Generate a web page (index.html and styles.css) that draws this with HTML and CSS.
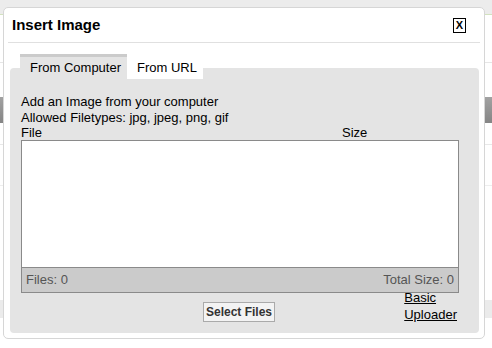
FILE: index.html
```html
<!DOCTYPE html>
<html>
<head>
<meta charset="utf-8">
<link rel="stylesheet" href="styles.css">
</head>
<body>
<div class="page">
  <div class="topbar"></div>
  <div class="gap-a"></div>
  <div class="graybar"></div>
  <div class="gap-b"></div>
  <div class="gap-c"></div>
  <div class="lowband"></div>
</div>

<div class="modal">
  <div class="modal-head">
    <div class="modal-title">Insert Image</div>
    <div class="close">X</div>
  </div>
  <div class="tabs">
    <div class="tabbar">
      <div class="tab active">From Computer</div>
      <div class="tab">From URL</div>
    </div>
    <div class="panel">
      <div class="info">
        <div>Add an Image from your computer</div>
        <div>Allowed Filetypes: jpg, jpeg, png, gif</div>
      </div>
      <div class="cols">
        <span class="col-file">File</span>
        <span class="col-size">Size</span>
      </div>
      <div class="filebox">
        <div class="filelist"></div>
        <div class="filefoot">
          <span>Files: 0</span>
          <span>Total Size: 0</span>
        </div>
      </div>
      <div class="actions">
        <div></div>
        <button class="select-btn" type="button">Select Files</button>
        <a class="basic-link" href="#">Basic<br>Uploader</a>
      </div>
    </div>
  </div>
</div>
</body>
</html>
```
FILE: styles.css
```css
html, body {
  margin: 0;
  padding: 0;
}
body {
  background: #ffffff;
  font-family: "Liberation Sans", Arial, sans-serif;
  font-size: 13px;
  color: #000;
  width: 492px;
  height: 348px;
  overflow: hidden;
}
.page {
  width: 492px;
}
.topbar {
  height: 14px;
  background: #ececec;
  border-bottom: 1px solid #d3e2bf;
}
.gap-a {
  height: 47px;
  border-bottom: 1px solid #e6e6e6;
  margin-bottom: 34px;
}
.graybar {
  height: 26px;
  background: linear-gradient(#a2a2a2, #858585);
}
.gap-b {
  height: 21px;
  border-bottom: 1px solid #e8e8e8;
}
.gap-c {
  height: 40px;
  border-bottom: 1px solid #eeeeee;
}
.lowband {
  margin-top: 114px;
  height: 18px;
  background: #ebebeb;
}

.modal {
  position: absolute;
  left: 3px;
  top: 7px;
  width: 482px;
  height: 332px;
  box-sizing: border-box;
  background: #fff;
  border: 1px solid #d6d6d6;
  border-radius: 5px;
}
.modal-head {
  margin: 0 4px;
  padding: 8px 14px 0 4px;
  height: 26px;
  border-bottom: 1px solid #e0e0e0;
  display: flex;
  justify-content: space-between;
  align-items: flex-start;
}
.modal-title {
  font-weight: bold;
  font-size: 15px;
  line-height: 17px;
}
.close {
  margin-top: 2px;
  width: 11px;
  height: 13px;
  border: 1px solid #000;
  font-weight: bold;
  font-size: 11px;
  line-height: 13px;
  text-align: center;
}

.tabs {
  margin: 11px 5px 0 6px;
}
.tabbar {
  display: flex;
  padding-left: 10px;
  margin-bottom: -11px;
  position: relative;
  z-index: 1;
}
.tab {
  padding: 3px 6px 4px 10px;
  line-height: 15px;
  border-top: 3px solid #fff;
  background: #fff;
}
.tab.active {
  background: #e4e4e4;
  border-top-color: #cbcbcb;
}
.panel {
  background: #e4e4e4;
  border-radius: 4px;
  padding: 26px 20px 10px 11px;
}
.info {
  line-height: 16px;
}
.cols {
  display: flex;
  line-height: 14px;
}
.col-file {
  width: 321px;
}
.filebox {
  border: 1px solid #8a8a8a;
  background: #fff;
}
.filelist {
  height: 126px;
}
.filefoot {
  border-top: 1px solid #8a8a8a;
  background: #cbcbcb;
  color: #555;
  line-height: 24px;
  padding: 0 4px;
  display: flex;
  justify-content: space-between;
}
.actions {
  display: grid;
  grid-template-columns: 1fr auto 1fr;
  align-items: start;
  padding-right: 2px;
}
.select-btn {
  margin-top: 9px;
  height: 20px;
  padding: 0 2px;
  border: 1px solid #aaaaaa;
  background: #f3f3f3;
  font-family: "Liberation Sans", Arial, sans-serif;
  font-weight: bold;
  font-size: 12px;
  line-height: 18px;
  color: #333;
  border-radius: 0;
}
.basic-link {
  justify-self: end;
  margin-top: -4px;
  color: #000;
  text-decoration: underline;
  line-height: 17px;
}
```
